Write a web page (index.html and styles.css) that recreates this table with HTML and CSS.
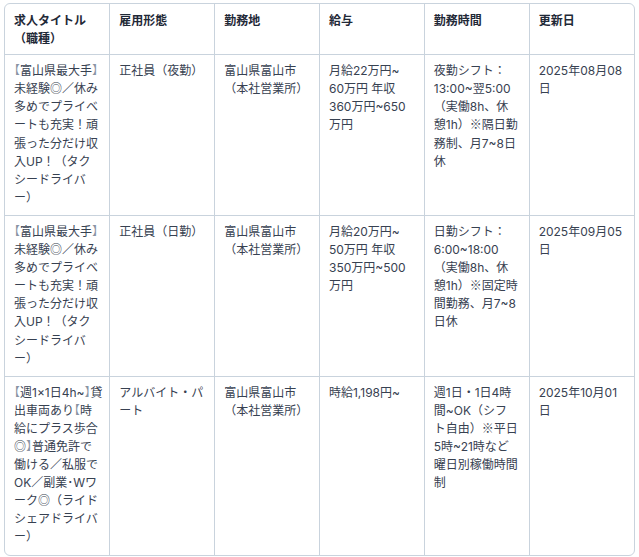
FILE: index.html
```html
<!DOCTYPE html>
<html lang="ja">
<head>
<meta charset="utf-8">
<title>求人一覧</title>
<link rel="stylesheet" href="styles.css">
</head>
<body>
<div class="table-wrap">
  <table class="jobs">
    <thead>
      <tr>
        <th>求人タイトル<br>（職種）</th>
        <th>雇用形態</th>
        <th>勤務地</th>
        <th>給与</th>
        <th>勤務時間</th>
        <th>更新日</th>
      </tr>
    </thead>
    <tbody>
      <tr>
        <td><span class="br">【</span>富山県最大手<span class="br">】</span><br>未経験◎／休み<br>多めでプライベ<br>ートも充実！頑<br>張った分だけ収<br>入UP！（タク<br>シードライバ<br>ー）</td>
        <td>正社員（夜勤）</td>
        <td>富山県富山市<br>（本社営業所）</td>
        <td>月給22万円~<br>60万円 年収<br>360万円~650<br>万円</td>
        <td>夜勤シフト：<br>13:00~翌5:00<br>（実働8h、休<br>憩1h）<span class="ja">※</span>隔日勤<br>務制、月7~8日<br>休</td>
        <td>2025年08月08<br>日</td>
      </tr>
      <tr>
        <td><span class="br">【</span>富山県最大手<span class="br">】</span><br>未経験◎／休み<br>多めでプライベ<br>ートも充実！頑<br>張った分だけ収<br>入UP！（タク<br>シードライバ<br>ー）</td>
        <td>正社員（日勤）</td>
        <td>富山県富山市<br>（本社営業所）</td>
        <td>月給20万円~<br>50万円 年収<br>350万円~500<br>万円</td>
        <td>日勤シフト：<br>6:00~18:00<br>（実働8h、休<br>憩1h）<span class="ja">※</span>固定時<br>間勤務、月7~8<br>日休</td>
        <td>2025年09月05<br>日</td>
      </tr>
      <tr>
        <td><span class="br">【</span>週1×1日4h~<span class="br">】</span>貸<br>出車両あり<span class="br">【</span>時<br>給にプラス歩合<br>◎<span class="br">】</span>普通免許で<br>働ける／私服で<br>OK／副業･Wワ<br>ーク◎（ライド<br>シェアドライバ<br>ー）</td>
        <td>アルバイト・パ<br>ート</td>
        <td>富山県富山市<br>（本社営業所）</td>
        <td>時給1,198円~</td>
        <td>週1日・1日4時<br>間~OK（シフ<br>ト自由）<span class="ja">※</span>平日<br>5時~21時など<br>曜日別稼働時間<br>制</td>
        <td>2025年10月01<br>日</td>
      </tr>
    </tbody>
  </table>
</div>
</body>
</html>
```

FILE: styles.css
```css
html, body {
  margin: 0;
  padding: 0;
  background: #ffffff;
}

body {
  font-family: Inter, "Noto Sans CJK JP", sans-serif;
  font-size: 12px;
  line-height: 18.1px;
  color: #374151;
}

.table-wrap {
  margin: 3px 4px;
  border: 1px solid #c9d3dd;
  border-radius: 6px;
  overflow: hidden;
}

.jobs {
  width: 100%;
  border-collapse: collapse;
  table-layout: fixed;
}

.jobs th,
.jobs td {
  padding: 7px 9px 8px 9px;
  text-align: left;
  vertical-align: top;
  white-space: nowrap;
  border-right: 1px solid #c9d3dd;
  border-bottom: 1px solid #c9d3dd;
}

.jobs th {
  padding-top: 8px;
  padding-bottom: 6px;
  font-weight: 700;
  color: #1f2937;
}

.jobs th:last-child,
.jobs td:last-child {
  border-right: none;
}

.jobs tbody tr:last-child td {
  border-bottom: none;
}

.br {
  font-family: "Noto Sans CJK JP", sans-serif;
  font-feature-settings: "halt";
  font-weight: 100;
  color: #8a94a3;
  line-height: 10px;
}

.ja {
  font-family: "Noto Sans CJK JP", sans-serif;
  line-height: 10px;
}
```
